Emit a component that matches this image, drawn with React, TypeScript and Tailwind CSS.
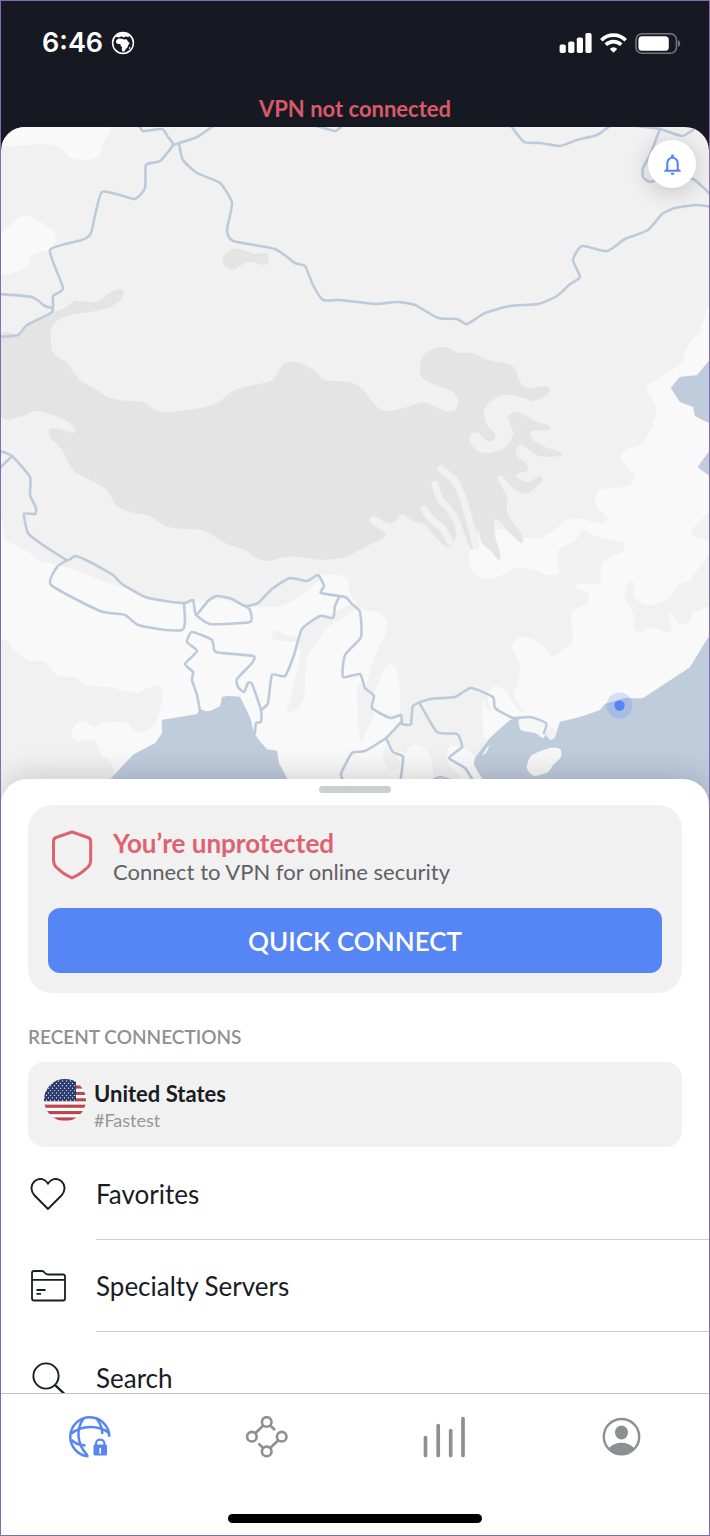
import type { ReactNode } from "react";
import { MdNotificationsNone } from "react-icons/md";

// Map geometry: flat lists of x,y pairs
const HIGHLANDS = [
  "0,337 18,335 27,325 45,315 65,308 75,301 95,302 113,291 123,290 122,298 110,307 90,312 70,315 58,320 51,330 51,345 54,354 67,363 80,380 97,390 110,398 127,401 143,402 158,411 180,411 215,404 235,390 270,381 278,372 285,363 300,363 315,371 325,380 350,382 363,390 375,405 385,411 400,409 420,403 430,404 445,411 455,410 458,400 452,391 440,387 425,380 420,373 422,358 430,350 445,347 459,353 472,353 488,360 508,364 516,370 520,382 528,388 545,386 550,390 545,396 533,401 520,397 505,395 490,402 484,412 487,425 495,434 493,440 487,441 478,433 471,434 470,442 478,451 490,453 505,447 513,435 511,426 508,417 514,412 525,415 535,421 549,426 548,430 532,431 533,440 545,447 560,452 560,456 540,456 528,449 521,445 516,450 518,457 527,464 527,471 517,474 518,478 528,482 540,476 542,481 530,492 522,493 512,487 502,476 498,479 507,497 507,512 515,525 523,538 521,543 510,533 497,519 494,526 496,540 500,552 499,560 490,550 482,543 478,530 472,550 465,536 460,530 450,547 438,540 425,525 415,522 408,518 402,514 393,523 385,522 374,516 370,522 384,532 383,538 365,547 350,555 340,558 322,560 300,557 285,557 268,561 255,557 245,550 225,543 205,531 185,529 165,526 150,516 130,512 116,505 107,490 90,480 73,470 62,450 50,437 50,429 60,429 73,433 75,429 65,420 50,414 35,411 20,417 0,413",
  "223,257 232,249 243,250 255,254 266,253 269,260 264,265 248,262 233,270 224,265",
];

const VALLEYS = [
  "441,469 455,481 462,496 468,515 476,546",
  "435,484 440,499 450,510 458,525 461,542",
  "424,509 431,519 442,528 450,542",
];

const LOWLANDS = [
  "0,120 103,120 103,145 98,156 85,160 70,157 60,148 45,144 25,145 0,144",
  "0,236 10,226 20,217 32,217 48,227 55,233 54,247 48,250 32,255 28,265 18,271 0,273",
  "0,535 7,541 30,553 38,560 75,570 105,582 130,590 145,598 185,603 196,602 210,600 225,600 245,606 262,607 280,606 300,597 318,582 322,575 345,577 350,593 360,608 380,613 387,625 383,640 375,655 370,672 366,690 372,700 390,716 402,718 386,738 398,752 404,757 400,810 0,810",
  "720,332 697,336 688,345 683,360 675,368 660,378 648,385 647,391 654,402 656,415 648,435 640,445 625,450 622,460 634,476 628,486 610,488 600,490 595,497 598,508 607,518 602,524 580,519 565,521 555,530 540,538 525,538 512,532 496,530 490,545 477,538 470,550 470,567 478,576 490,579 502,575 515,568 530,569 550,575 559,571 557,555 562,547 575,541 582,530 592,535 610,540 624,543 622,552 605,560 601,568 600,583 578,584 577,588 588,593 587,603 572,613 573,640 565,648 553,656 545,647 535,640 520,637 512,648 520,665 517,685 514,695 524,712 515,706 505,690 493,687 488,700 500,718 545,722 640,810 720,810",
  "375,692 385,668 393,665 399,680 400,712 390,714 376,706",
  "483,700 489,710 513,719 490,738 483,732",
  "407,751 416,745 428,752 433,770 432,810 400,810 403,765",
  "449,748 462,747 478,762 490,810 470,810 462,780 448,762",
];

const UPLANDS = [
  "0,650 15,651 28,660 45,662 57,675 75,678 90,686 110,687 135,693 150,687 160,686 162,700 157,720 150,729 138,733 132,728 126,723 105,722 95,727 84,721 76,724 72,735 78,741 95,740 102,756 112,765 113,810 0,810",
  "350,605 332,614 310,620 300,640 300,655 296,675 290,700 287,712 298,708 305,695 305,675 308,655 320,638 330,625 352,612",
  "272,635 276,630 287,636 298,637 300,642 285,641 275,640",
  "358,686 360,740 367,730 374,714 372,700 366,690",
  "385,748 396,754 400,765 392,770 384,762",
  "710,514 700,521 692,531 697,538 712,537",
  "712,556 698,569 690,580 678,585 670,597 660,603 645,605 635,597 633,581 627,585 625,600 633,613 634,628 640,633 650,627 670,632 670,613 678,623 688,623 693,613 712,601",
];

const WATER = [
  "712,358 697,375 680,377 671,388 680,402 693,407 695,416 712,423",
  "712,448 698,467 712,477",
  "108,782 133,755 155,743 162,733 162,720 180,717 197,714 200,709 205,711 210,711 220,706 222,697 228,696 240,697 250,717 254,732 259,740 267,749 277,751 279,763 290,784 290,810 100,810",
  "712,634 690,667 643,698 625,698 605,704 600,710 580,717 560,722 555,738 550,740 545,733 546,722 520,718 510,720 490,738 475,758 474,765 484,782 490,810 712,810",
];

const ISLANDS = [
  "527,765 532,755 550,748 560,749 561,757 553,765 548,772 535,776 528,771",
  "520,718 545,722 546,732 543,738 535,733 521,730",
  "489,745 486,753 480,755",
];

const BORDERS = [
  "139,124 143,131 162,129 168,137 173,145 160,161 146,165 145,188 134,199 102,192 91,233 82,240 50,250 63,288 53,296 52,312 27,325 18,335 0,337",
  "173,145 197,137 213,126",
  "179,144 183,160 197,173 220,183 232,203 227,230 233,241 275,249 295,263 305,266 313,285 323,300 340,300 375,304 397,302 415,305 438,318 457,319 467,324 485,313 510,306 538,304 557,296 570,284 580,277 573,260 582,246 607,251 625,239 648,230 662,214 675,208 697,205 712,207",
  "317,126 335,131 342,126",
  "511,126 524,142 540,143 560,146 577,140 597,135 610,126",
  "638,126 660,129 682,136 696,128",
  "660,129 650,155 643,168 643,177 650,182 665,178 693,179 712,196",
  "0,294 32,297 45,306 52,308",
  "0,451 12,456 30,477 30,495 36,508 35,514 24,514 28,533 40,543 67,560 75,556 90,562 113,575 122,584 145,597 165,601 185,603 193,600 196,615 208,601 217,596 232,599 245,606 258,603 272,589 290,578 307,581 318,575 324,586 321,593 345,597 352,604 360,612 361,637 345,655 343,677 360,674 365,688 374,696 372,708 390,718 401,715 402,724 411,724 413,706 430,699 455,697 471,688 493,697 495,708 513,718 530,717 546,723 544,733",
  "0,468 12,456",
  "67,560 57,567 51,585 100,611 125,615 138,625 165,630 182,630 185,622 184,604",
  "196,615 210,624 250,622 250,610 245,606",
  "200,711 197,695 192,680 193,672 185,664 197,651 187,642 192,632 212,640 216,652 253,656 252,663 237,679 238,687 244,692 248,683 252,684 261,710 261,722 256,723 255,733",
  "261,710 268,703 272,675 285,676 294,655 302,629 320,616 333,618 335,606 339,597",
  "402,721 386,738 365,751 352,753 341,774 345,784",
  "386,738 393,752 403,757 400,784",
  "420,704 437,732 457,734 462,747 449,758 465,768 475,784",
  "433,780 440,777 450,780",
  "490,741 479,757",
];

// Turns a point list into a path, rounding each vertex by the given amount
function toPath(list: string, round: number, closed = false) {
  const pts = list.split(" ").map((p) => p.split(",").map(Number));
  const n = pts.length;
  const at = (i: number) =>
    closed ? pts[(i + n) % n] : pts[Math.min(Math.max(i, 0), n - 1)];
  let d = `M${pts[0][0]} ${pts[0][1]}`;
  for (let i = 0; i < (closed ? n : n - 1); i++) {
    const [a, b, c, e] = [at(i - 1), at(i), at(i + 1), at(i + 2)];
    d += `C${b[0] + (c[0] - a[0]) * round} ${b[1] + (c[1] - a[1]) * round} ${
      c[0] - (e[0] - b[0]) * round
    } ${c[1] - (e[1] - b[1]) * round} ${c[0]} ${c[1]}`;
  }
  return closed ? d + "Z" : d;
}

function Area({ shapes, fill, round = 0.16 }: { shapes: string[]; fill: string; round?: number }) {
  return (
    <g fill={fill}>
      {shapes.map((s) => (
        <path key={s} d={toPath(s, round, true)} />
      ))}
    </g>
  );
}

function WorldMap() {
  return (
    <svg
      viewBox="1 127 708 680"
      preserveAspectRatio="xMidYMid slice"
      className="block h-full w-full"
      role="img"
      aria-label="Map"
    >
      <rect y="120" width="712" height="700" fill="#f1f1f1" />
      <Area shapes={LOWLANDS} fill="#f9f9f9" />
      <Area shapes={UPLANDS} fill="#f1f1f1" />
      <Area shapes={HIGHLANDS} fill="#e4e4e4" />
      <g fill="none" stroke="#f1f1f1" strokeWidth="7" strokeLinecap="round">
        {VALLEYS.map((v) => (
          <path key={v} d={toPath(v, 0.16)} />
        ))}
      </g>
      <Area shapes={WATER} fill="#bfccdc" round={0.03} />
      <Area shapes={ISLANDS} fill="#f7f7f7" round={0.12} />
      <g fill="none" stroke="#bdcadb" strokeWidth="2.6" strokeLinecap="round" strokeLinejoin="round">
        {BORDERS.map((b) => (
          <path key={b} d={toPath(b, 0.09)} />
        ))}
      </g>
      <circle cx="619.5" cy="705.5" r="13" fill="#5686f5" fillOpacity="0.22" />
      <circle cx="619.5" cy="705.5" r="5.2" fill="#5686f5" />
    </svg>
  );
}

function StatusBar() {
  return (
    <div className="flex h-[84px] items-center justify-between pr-7 pl-[41px] text-white">
      <div className="flex items-center gap-2">
        <span className="font-[Inter,sans-serif] text-[27px] leading-8 font-semibold">6:46</span>
        <svg width="24" height="24" viewBox="0 0 24 24">
          <circle cx="12" cy="12" r="10.4" fill="none" stroke="#fff" strokeWidth="1.5" />
          <path
            fill="#fff"
            d="M4.5 5.5 7.5 2.800 11 1.800 15.500 2.300 19 4.600 17.500 6 14.500 5.600 12.500 6.500 10.500 5.200 8.500 6.300 6.500 6.200ZM5.200 9.300 7.600 7.600 11 7.700 13 8.600 15.600 8.300 17 10.600 18.800 12.300 17.200 14 16.400 16.400 14.800 18 13.400 20.600 11.600 20.800 10.800 18.400 11 16.200 9.600 14.400 9.400 13 6.800 13 5 11.600ZM17.800 17.400 18.800 15.600 19.400 16.200 18.400 18.400Z"
          />
        </svg>
      </div>
      <div className="flex items-center gap-2">
        <svg width="33" height="20" viewBox="0 0 33 20" fill="#fff">
          <rect x="0.6" y="11.5" width="6.2" height="8.5" rx="1.8" />
          <rect x="9.2" y="8.5" width="6.2" height="11.5" rx="1.8" />
          <rect x="17.8" y="4.5" width="6.2" height="15.5" rx="1.8" />
          <rect x="26.4" width="6.2" height="20" rx="1.8" />
        </svg>
        <svg width="27" height="20" viewBox="0 0 27 20" fill="none" stroke="#fff" strokeWidth="3.7">
          <path d="M1.3 7.2a17.3 17.3 0 0 1 24.4 0" />
          <path d="M5.8 11.8a10.9 10.9 0 0 1 15.4 0" />
          <path d="M9.8 15.9a5.2 5.2 0 0 1 7.4 0L13.5 19.7Z" fill="#fff" stroke="none" />
        </svg>
        <svg width="46" height="21" viewBox="0 0 46 21">
          <rect x="1" y="0.8" width="40.5" height="19.4" rx="6" fill="none" stroke="#74767d" strokeWidth="1.6" />
          <rect x="3.4" y="3.2" width="30.4" height="14.6" rx="3.6" fill="#fff" />
          <path d="M43 7.2c3 1 3 5.6 0 6.6Z" fill="#74767d" />
        </svg>
      </div>
    </div>
  );
}

function UsFlag() {
  const stars = [];
  for (let r = 0; r < 9; r++) {
    for (let c = 0; c < 9; c++) {
      stars.push(<circle key={`${r}-${c}`} cx={c * 4 + (r % 2 ? 0.5 : 2.5)} cy={2 + r * 2.4} r="0.7" />);
    }
  }
  return (
    <svg width="42" height="42" viewBox="0 0 42 42" className="shrink-0">
      <clipPath id="flag">
        <circle cx="21" cy="21" r="21" />
      </clipPath>
      <clipPath id="canton">
        <rect width="32" height="22" />
      </clipPath>
      <g clipPath="url(#flag)">
        <rect width="42" height="42" fill="#fff" />
        {[0, 1, 2, 3, 4, 5, 6].map((i) => (
          <rect key={i} y={i * 6.4} width="42" height="3.2" fill="#b9484f" />
        ))}
        <rect width="32" height="22" fill="#2b3a6e" />
        <g fill="#dfe3ee" clipPath="url(#canton)">{stars}</g>
      </g>
    </svg>
  );
}

function MenuRow({ icon, label }: { icon: ReactNode; label: string }) {
  return (
    <li>
      <button className="flex h-[92px] w-full items-center pl-[29px] text-left text-[#1a1c24]">
        <span className="w-[66px] shrink-0">{icon}</span>
        <span className="flex h-full flex-1 items-center border-b border-[#cfcfcf] text-[26px] leading-8">
          {label}
        </span>
      </button>
    </li>
  );
}

function Tab({ label, active, children }: { label: string; active?: boolean; children: ReactNode }) {
  return (
    <button
      aria-label={label}
      className={active ? "flex justify-center text-[#5686f0]" : "flex justify-center text-[#8e8f92]"}
    >
      <svg width="42" height="42" viewBox="0 0 42 42" fill="none" stroke="currentColor">
        {children}
      </svg>
    </button>
  );
}

export default function App() {
  return (
    <div className="flex h-screen flex-col overflow-hidden border border-[#8568b8] bg-[#171922] font-[Lato,sans-serif]">
      <header className="shrink-0">
        <StatusBar />
        <p className="h-[42px] pt-2 text-center text-[22px] leading-8 font-bold text-[#d95966]">
          VPN not connected
        </p>
      </header>

      <div className="relative h-[680px] shrink-0 overflow-hidden rounded-t-3xl">
        <WorldMap />
        <button
          aria-label="Notifications"
          className="absolute top-[13px] right-[13px] flex size-12 items-center justify-center rounded-full bg-white text-[#5686f0] shadow-[0_4px_24px_rgba(0,0,0,0.2)]"
        >
          <MdNotificationsNone size={25} />
        </button>
      </div>

      <main className="relative -mt-7 min-h-0 flex-1 overflow-hidden rounded-t-[26px] bg-white shadow-[0_-4px_30px_rgba(0,0,0,0.16)]">
        <div className="mx-auto mt-[7px] h-[7px] w-[72px] rounded-full bg-[#cdced0]" />

        <section className="mx-[27px] mt-3 rounded-3xl bg-[#f1f1f1] px-5 pt-5 pb-5">
          <div className="flex h-16 items-center gap-5 pl-1">
            <svg width="41" height="50" viewBox="0 0 41 50" fill="none" stroke="#dd6371" strokeWidth="3" strokeLinejoin="round" className="mb-1">
              <path d="M20 2 36 7.500Q38.700 8.500 38.700 11.500V30Q38.700 34.500 35.500 37.500 29 44 20 48 11 44 4.500 37.500 1.500 34.500 1.500 30V11.500Q1.500 8.500 4 7.500Z" />
            </svg>
            <div>
              <h1 className="text-[26px] leading-[30px] font-bold text-[#dd6371]">You’re unprotected</h1>
              <p className="text-[22px] leading-7 text-[#5f6065]">Connect to VPN for online security</p>
            </div>
          </div>
          <button className="mt-[19px] h-[65px] w-full rounded-xl bg-[#5686f5] text-[26px] leading-8 font-semibold text-white">
            QUICK CONNECT
          </button>
        </section>

        <h2 className="mx-[27px] mt-8 text-[19px] leading-6 font-semibold text-[#8f9094]">
          RECENT CONNECTIONS
        </h2>
        <button className="mx-[27px] mt-[13px] flex h-[85px] w-[calc(100%-54px)] rounded-2xl bg-[#f1f1f1] px-4 pt-[17px] text-left">
          <UsFlag />
          <span className="ml-2 flex flex-col">
            <span className="text-[22px] leading-[30px] font-bold text-[#1a1c24]">United States</span>
            <span className="text-[18px] leading-[22px] text-[#95969a]">#Fastest</span>
          </span>
        </button>

        <ul className="mt-px">
          <MenuRow
            label="Favorites"
            icon={
              <svg width="36" height="36" viewBox="0 0 36 36" fill="none" stroke="currentColor" strokeWidth="1.9">
                <path d="M18 33 4.6 19.5C-.5 14 1.3 7.5 5.5 4.5 10 1.5 15 3 18 7.5 21 3 26 1.5 30.5 4.5 34.7 7.5 36.5 14 31.4 19.5Z" />
              </svg>
            }
          />
          <MenuRow
            label="Specialty Servers"
            icon={
              <svg width="36" height="36" viewBox="0 0 36 36" fill="none" stroke="currentColor" strokeWidth="1.8">
                <path d="M2 30.5V5Q2 3 4 3H12Q13.5 3 14.5 4.5 16 6.5 18 6.5H33Q35 6.5 35 8.5V30.5Q35 32.5 33 32.5H4Q2 32.5 2 30.5ZM2 11.8H35M6.5 22H15.5M6.5 25.8H11" />
              </svg>
            }
          />
          <MenuRow
            label="Search"
            icon={
              <svg width="36" height="36" viewBox="0 0 36 36" fill="none" stroke="currentColor" strokeWidth="1.9">
                <circle cx="16" cy="16" r="12.6" />
                <path d="M25 25 35 34.5" strokeWidth="2.4" />
              </svg>
            }
          />
        </ul>
      </main>

      <footer className="relative shrink-0 border-t border-[#c6c6c8] bg-white">
        <nav className="grid grid-cols-4 pt-[22px]">
          <Tab label="Servers" active>
            <g strokeWidth="2.5">
              <path d="M19.5 40.3A19.5 19.5 0 1 1 40.3 20.7" />
              <path d="M14.5 2.5C7 13 7.5 28 18.5 39.3M27.5 2.5C31.5 7.5 33.3 12 33.3 18" />
              <path d="M2.5 17.5C13 9 30 9 40 17M2.5 24C6 27.5 10.5 29.2 16.5 29.6" />
            </g>
            <path d="M27 30V27.5C27 22.2 35.4 22.2 35.4 27.5V30" strokeWidth="2.2" />
            <rect x="24.5" y="28.5" width="13.5" height="11" rx="1.5" fill="currentColor" stroke="none" />
            <path d="M31.2 32.5V37" stroke="#fff" strokeWidth="1.7" strokeLinecap="round" />
          </Tab>
          <Tab label="Meshnet">
            <g strokeWidth="2.6">
              <circle cx="20.7" cy="6" r="4.8" />
              <circle cx="5.9" cy="20.7" r="4.8" />
              <circle cx="35.7" cy="20.7" r="4.8" />
              <circle cx="20.7" cy="35.4" r="4.8" />
              <path d="M9.3 17.2 17.2 9.5M24.2 9.5 29 14M32.3 24.2 24.2 32M17.2 32 12.5 27.5" />
            </g>
          </Tab>
          <Tab label="Statistics">
            <path
              d="M2.5 21.5V39.5M15.2 9.5V39.5M27.7 14.5V39.5M40 2.5V39.5"
              strokeWidth="3.7"
              strokeLinecap="round"
            />
          </Tab>
          <Tab label="Profile">
            <circle cx="21.5" cy="20.7" r="17.7" strokeWidth="2.4" />
            <ellipse cx="21.5" cy="16.5" rx="6.5" ry="7" fill="currentColor" stroke="none" />
            <path d="M8.5 32.5C15 24.8 28 24.8 34.5 32.5A17.7 17.7 0 0 1 8.5 32.5Z" fill="currentColor" stroke="none" />
          </Tab>
        </nav>
        <div className="mx-auto mt-14 mb-3 h-[9px] w-[254px] rounded-full bg-black" />
      </footer>
    </div>
  );
}
